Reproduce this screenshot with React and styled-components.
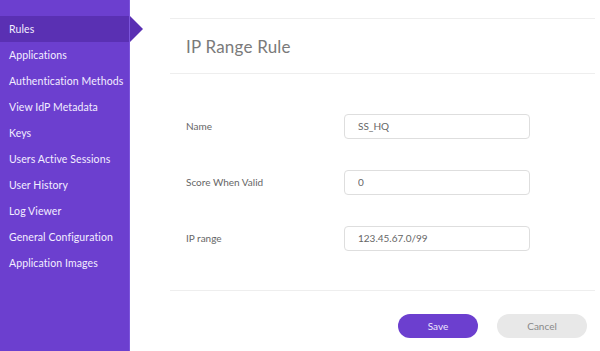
import React from 'react';
import styled, { createGlobalStyle } from 'styled-components';

const menu = [
    'Rules',
    'Applications',
    'Authentication Methods',
    'View IdP Metadata',
    'Keys',
    'Users Active Sessions',
    'User History',
    'Log Viewer',
    'General Configuration',
    'Application Images',
];

const fields = [
    { label: 'Name', value: 'SS_HQ' },
    { label: 'Score When Valid', value: '0' },
    { label: 'IP range', value: '123.45.67.0/99' },
];

const App = () => {
    return (
        <Page>
            <GlobalStyle />
            <Sidebar>
                {menu.map((item, i) => (
                    <Item key={item} active={i === 0}>{item}</Item>
                ))}
            </Sidebar>
            <Main>
                <Header>
                    <Title>IP Range Rule</Title>
                </Header>
                <Form>
                    {fields.map(({ label, value }) => (
                        <Row key={label}>
                            <Label>{label}</Label>
                            <Input defaultValue={value} />
                        </Row>
                    ))}
                </Form>
                <Footer>
                    <Button primary>Save</Button>
                    <Button>Cancel</Button>
                </Footer>
            </Main>
        </Page>
    )
}

const GlobalStyle = createGlobalStyle`
    html, body {
        margin: 0;
        padding: 0;
        background: #fff;
    }
    body {
        font-family: Lato, 'Noto Sans', sans-serif;
    }
`
const Page = styled.div`
    display: flex;
    width: 600px;
    height: 351px;
    overflow: hidden;
`
const Sidebar = styled.nav`
    width: 130px;
    flex-shrink: 0;
    background: #6c3fcf;
    border-right: 1px solid #7c55dc;
    box-sizing: border-box;
    padding-top: 16px;
    display: flex;
    flex-direction: column;
`
const Item = styled.div`
    position: relative;
    height: 26px;
    line-height: 26px;
    padding-left: 9px;
    font-size: 10.5px;
    letter-spacing: 0.1px;
    color: #f3eeff;
    white-space: nowrap;
    background: ${p => p.active ? '#5a30b3' : 'transparent'};
    &::after {
        content: '';
        display: ${p => p.active ? 'block' : 'none'};
        position: absolute;
        top: 0;
        right: -14px;
        border-top: 13px solid transparent;
        border-bottom: 13px solid transparent;
        border-left: 13px solid #5a30b3;
    }
`
const Main = styled.main`
    flex: 1;
    padding: 18px 5px 0 40px;
    display: flex;
    flex-direction: column;
`
const Header = styled.div`
    height: 54px;
    border-top: 1px solid #eeeeee;
    border-bottom: 1px solid #eeeeee;
    display: flex;
    align-items: center;
    padding-left: 16px;
`
const Title = styled.h1`
    margin: 0;
    font-size: 17px;
    font-weight: 400;
    letter-spacing: 0.2px;
    color: #7a7a7a;
`
const Form = styled.div`
    padding: 24px 0;
    border-bottom: 1px solid #eeeeee;
    display: flex;
    flex-direction: column;
`
const Row = styled.div`
    height: 56px;
    display: flex;
    align-items: center;
    padding-left: 16px;
`
const Label = styled.label`
    width: 158px;
    font-size: 10px;
    color: #666;
`
const Input = styled.input`
    width: 186px;
    height: 25px;
    box-sizing: border-box;
    border: 1px solid #dedede;
    border-radius: 4px;
    padding: 0 13px;
    font-family: inherit;
    font-size: 10px;
    color: #666;
    outline: none;
`
const Footer = styled.div`
    display: flex;
    justify-content: flex-end;
    gap: 19px;
    padding: 23px 8px 0 0;
`
const Button = styled.button`
    width: ${p => p.primary ? '80px' : '90px'};
    height: 24px;
    border: none;
    border-radius: 12px;
    background: ${p => p.primary ? '#6c3fcf' : '#e8e8e8'};
    color: ${p => p.primary ? '#efe8ff' : '#888'};
    font-family: inherit;
    font-size: 10px;
    cursor: pointer;
`

export default App
